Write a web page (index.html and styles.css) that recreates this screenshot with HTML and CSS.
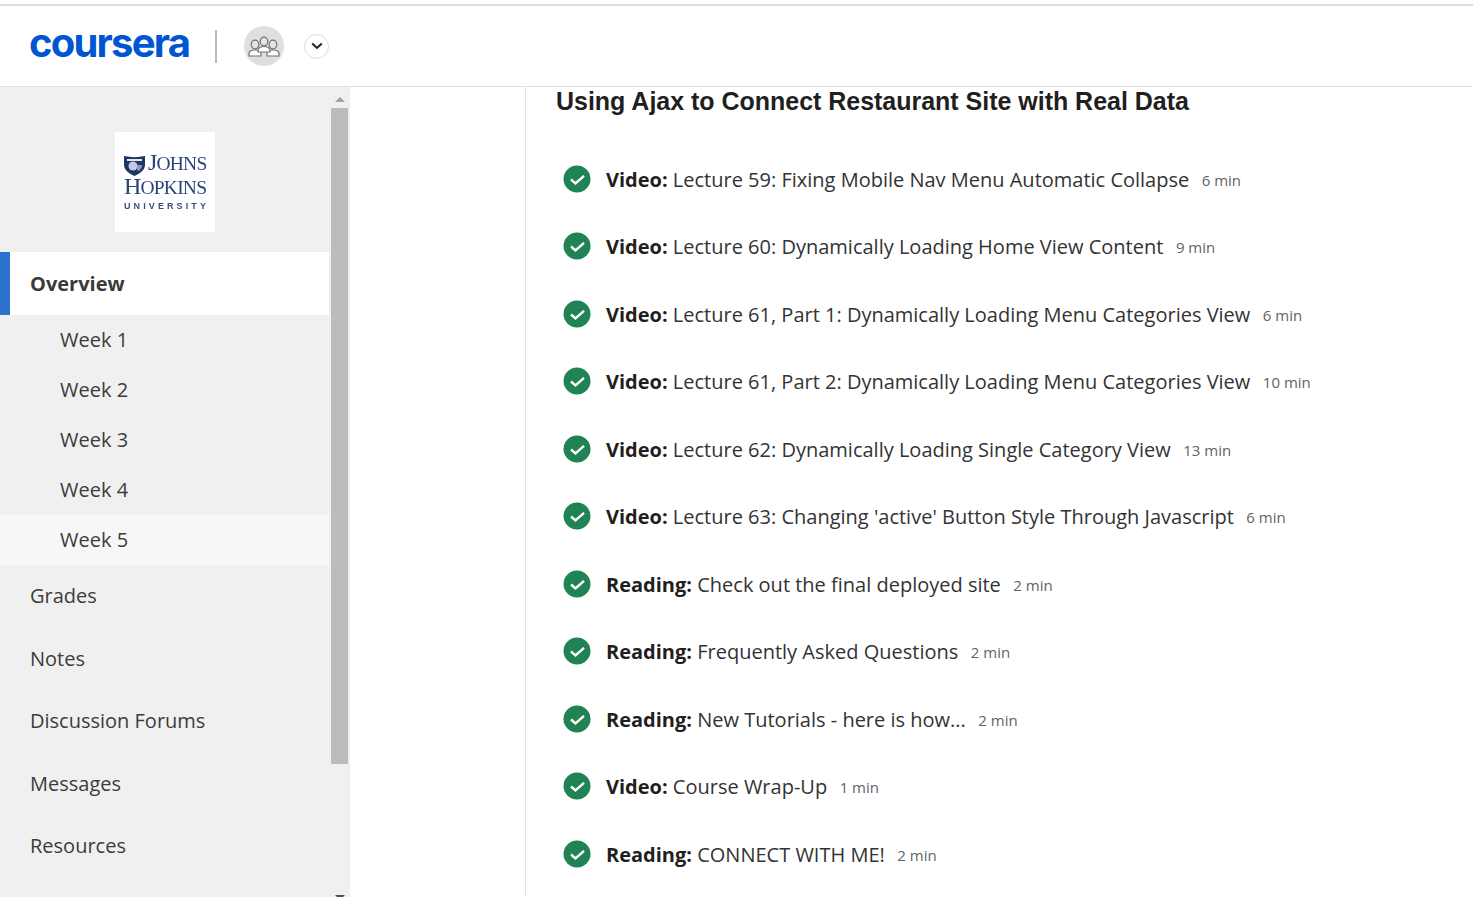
FILE: index.html
```html
<!DOCTYPE html>
<html lang="en">
<head>
<meta charset="utf-8">
<title>Coursera</title>
<link rel="stylesheet" href="styles.css">
</head>
<body>
<header class="topbar">
  <span class="logo">coursera</span>
  <span class="divider"></span>
  <span class="avatar">
    <svg width="32" height="21" viewBox="0 0 32 21" fill="#e4e4e4" stroke="#707070" stroke-width="1.200">
      <ellipse cx="7" cy="8.500" rx="3.800" ry="4.300"/>
      <path d="M1 20v-2.500c0-2.300 3-3.500 6-3.500s6 1.200 6 3.500V20z" fill="#fff"/>
      <ellipse cx="25" cy="8.500" rx="3.800" ry="4.300"/>
      <path d="M19 20v-2.500c0-2.300 3-3.500 6-3.500s6 1.200 6 3.500V20z" fill="#fff"/>
      <ellipse cx="16" cy="5.500" rx="3.800" ry="4.300"/>
      <path d="M10 16v-2c0-2 3-3.500 6-3.500s6 1.500 6 3.500v2z" fill="#fff"/>
    </svg>
  </span>
  <span class="caret-btn">
    <svg width="12" height="8" viewBox="0 0 12 8" fill="none" stroke="#1f1f1f" stroke-width="2"><path d="M1.200 1.500L6 6l4.800-4.500"/></svg>
  </span>
</header>

<div class="layout">
  <aside class="sidebar">
    <div class="side-scroll">
      <div class="uni-wrap">
        <div class="uni-logo">
          <div class="uni-top">
            <svg class="shield" width="21" height="21" viewBox="0 0 21 21"><path d="M0 1c7 1.500 14 1.500 21 0v9c0 5-5 8.500-10.500 11C5 18.500 0 15 0 10z" fill="#1d3568"/><path d="M3 4h15v2H3z" fill="#e6e9f0"/><circle cx="9" cy="11" r="4.500" fill="#c3cbdc"/><path d="M13 10h5v2l-3 4-2-1z" fill="#8b9abb"/></svg>
            <span class="uni-j"><span class="big">J</span>OHNS</span>
          </div>
          <div class="uni-h"><span class="big">H</span>OPKINS</div>
          <div class="uni-u">UNIVERSITY</div>
        </div>
      </div>
      <nav class="nav">
        <a class="nav-main active">Overview</a>
        <a class="nav-week">Week 1</a>
        <a class="nav-week">Week 2</a>
        <a class="nav-week">Week 3</a>
        <a class="nav-week">Week 4</a>
        <a class="nav-week current">Week 5</a>
        <a class="nav-main">Grades</a>
        <a class="nav-main">Notes</a>
        <a class="nav-main">Discussion Forums</a>
        <a class="nav-main">Messages</a>
        <a class="nav-main">Resources</a>
      </nav>
    </div>
    <div class="scrollbar">
      <span class="arrow-up"></span>
      <span class="thumb"></span>
      <span class="arrow-down"></span>
    </div>
  </aside>

  <main class="main">
    <h2 class="title">Using Ajax to Connect Restaurant Site with Real Data</h2>
    <ul class="items">
      <li class="item"><svg class="check" viewBox="0 0 28 28"><circle cx="14" cy="14" r="13.500"/><path d="M8 14.500l4.500 4L21 10.800"/></svg><span class="label"><b>Video:</b> Lecture 59: Fixing Mobile Nav Menu Automatic Collapse</span><span class="dur">6 min</span></li>
      <li class="item"><svg class="check" viewBox="0 0 28 28"><circle cx="14" cy="14" r="13.500"/><path d="M8 14.500l4.500 4L21 10.800"/></svg><span class="label"><b>Video:</b> Lecture 60: Dynamically Loading Home View Content</span><span class="dur">9 min</span></li>
      <li class="item"><svg class="check" viewBox="0 0 28 28"><circle cx="14" cy="14" r="13.500"/><path d="M8 14.500l4.500 4L21 10.800"/></svg><span class="label"><b>Video:</b> Lecture 61, Part 1: Dynamically Loading Menu Categories View</span><span class="dur">6 min</span></li>
      <li class="item"><svg class="check" viewBox="0 0 28 28"><circle cx="14" cy="14" r="13.500"/><path d="M8 14.500l4.500 4L21 10.800"/></svg><span class="label"><b>Video:</b> Lecture 61, Part 2: Dynamically Loading Menu Categories View</span><span class="dur">10 min</span></li>
      <li class="item"><svg class="check" viewBox="0 0 28 28"><circle cx="14" cy="14" r="13.500"/><path d="M8 14.500l4.500 4L21 10.800"/></svg><span class="label"><b>Video:</b> Lecture 62: Dynamically Loading Single Category View</span><span class="dur">13 min</span></li>
      <li class="item"><svg class="check" viewBox="0 0 28 28"><circle cx="14" cy="14" r="13.500"/><path d="M8 14.500l4.500 4L21 10.800"/></svg><span class="label"><b>Video:</b> Lecture 63: Changing 'active' Button Style Through Javascript</span><span class="dur">6 min</span></li>
      <li class="item"><svg class="check" viewBox="0 0 28 28"><circle cx="14" cy="14" r="13.500"/><path d="M8 14.500l4.500 4L21 10.800"/></svg><span class="label"><b>Reading:</b> Check out the final deployed site</span><span class="dur">2 min</span></li>
      <li class="item"><svg class="check" viewBox="0 0 28 28"><circle cx="14" cy="14" r="13.500"/><path d="M8 14.500l4.500 4L21 10.800"/></svg><span class="label"><b>Reading:</b> Frequently Asked Questions</span><span class="dur">2 min</span></li>
      <li class="item"><svg class="check" viewBox="0 0 28 28"><circle cx="14" cy="14" r="13.500"/><path d="M8 14.500l4.500 4L21 10.800"/></svg><span class="label"><b>Reading:</b> New Tutorials - here is how...</span><span class="dur">2 min</span></li>
      <li class="item"><svg class="check" viewBox="0 0 28 28"><circle cx="14" cy="14" r="13.500"/><path d="M8 14.500l4.500 4L21 10.800"/></svg><span class="label"><b>Video:</b> Course Wrap-Up</span><span class="dur">1 min</span></li>
      <li class="item"><svg class="check" viewBox="0 0 28 28"><circle cx="14" cy="14" r="13.500"/><path d="M8 14.500l4.500 4L21 10.800"/></svg><span class="label"><b>Reading:</b> CONNECT WITH ME!</span><span class="dur">2 min</span></li>
    </ul>
  </main>
</div>
</body>
</html>
```
FILE: styles.css
```css
* { box-sizing: border-box; }
html, body { margin: 0; height: 897px; overflow: hidden; background: #fff; }
body { font-family: "Open Sans", sans-serif; color: #1f1f1f; padding-top: 4px; }

.topbar {
  height: 83px;
  display: flex;
  align-items: center;
  padding: 0 0 0 29px;
  border-top: 2px solid #dedede;
  border-bottom: 1px solid #e1e1e1;
  background: #fff;
}
.logo {
  font-family: Inter, sans-serif;
  font-weight: 700;
  font-size: 40px;
  line-height: 44px;
  letter-spacing: -1.800px;
  color: #0056d2;
  width: 161px;
  margin-top: -6px;
  white-space: nowrap;
}
.divider { width: 2px; height: 33px; background: #b9b9b9; margin-left: 25px; }
.avatar {
  width: 40px; height: 40px; border-radius: 50%;
  background: #dfdfdf;
  margin-left: 27px;
  display: flex; align-items: center; justify-content: center;
}
.caret-btn {
  width: 25px; height: 25px; border-radius: 50%;
  border: 1px solid #dcdcdc;
  margin-left: 20px;
  display: flex; align-items: center; justify-content: center;
}

.layout { display: flex; height: 810px; }
.sidebar { width: 350px; background: #f0f0f0; display: flex; flex-shrink: 0; }
.side-scroll { width: 329px; }
.uni-wrap { padding: 45px 0 20px 115px; }
.uni-logo {
  width: 100px; height: 100px;
  background: #fff;
  color: #2a4479;
  font-family: "Liberation Serif", serif;
  padding: 18px 0 0 9px;
  filter: blur(.35px);
}
.uni-top { display: flex; align-items: center; gap: 3px; height: 25px; }
.shield { align-self: flex-start; margin-top: 5px; }
.uni-j, .uni-h { font-size: 19.500px; letter-spacing: -.8px; line-height: 24px; white-space: nowrap; }
.big { font-size: 24px; }
.uni-h { margin-top: -1px; height: 24px; }
.uni-u {
  font-family: "Liberation Sans", sans-serif;
  font-weight: 700; font-size: 9px; letter-spacing: 3.100px; line-height: 11px;
  margin-top: 3px;
  white-space: nowrap;
  color: #3a4d7f;
}

.nav { display: flex; flex-direction: column; }
.nav-main {
  height: 62.500px; padding: 0 0 1px 30px;
  display: flex; align-items: center;
  font-size: 20px; color: #3c3c3c;
}
.nav-main.active {
  height: 63px;
  background: #fff;
  border-left: 10px solid #2a73cc;
  padding-left: 20px;
  font-weight: 700;
  color: #3a3a3a;
}
.nav-week {
  height: 50px; padding: 0 0 2px 60px;
  display: flex; align-items: center;
  font-size: 20px; color: #3c3c3c;
}
.nav-week.current { background: #f7f7f7; }

.scrollbar { width: 18px; margin-left: 2px; position: relative; }
.thumb { position: absolute; top: 21px; left: 0; width: 17px; height: 656px; background: #bcbcbc; }
.arrow-up {
  position: absolute; top: 10px; left: 4px;
  border-left: 5px solid transparent; border-right: 5px solid transparent;
  border-bottom: 5px solid #a3a3a3;
}
.arrow-down {
  position: absolute; top: 808px; left: 4px;
  border-left: 5px solid transparent; border-right: 5px solid transparent;
  border-top: 5px solid #505050;
}

.main {
  margin-left: 175px;
  flex: 1;
  border-left: 1px solid #e1e1e1;
  padding-left: 30px;
}
.title {
  margin: -1px 0 0;
  font-family: "Liberation Sans", sans-serif;
  font-weight: 700;
  font-size: 25px;
  line-height: 30px;
  letter-spacing: -.02px;
  color: #1f1f1f;
}
.items { list-style: none; margin: 30px 0 0; padding: 0 0 0 7px; }
.item { display: flex; align-items: center; height: 67.500px; }
.check { width: 28px; height: 28px; flex-shrink: 0; margin-right: 15px; margin-top: -2px; }
.check circle { fill: #1f8354; }
.check path { fill: none; stroke: #fff; stroke-width: 2.400; }
.label { font-size: 20px; line-height: 28px; color: #333; }
.label b { font-weight: 700; color: #1f1f1f; }
.dur { font-size: 15px; color: #636363; margin-left: 12.500px; }
```
